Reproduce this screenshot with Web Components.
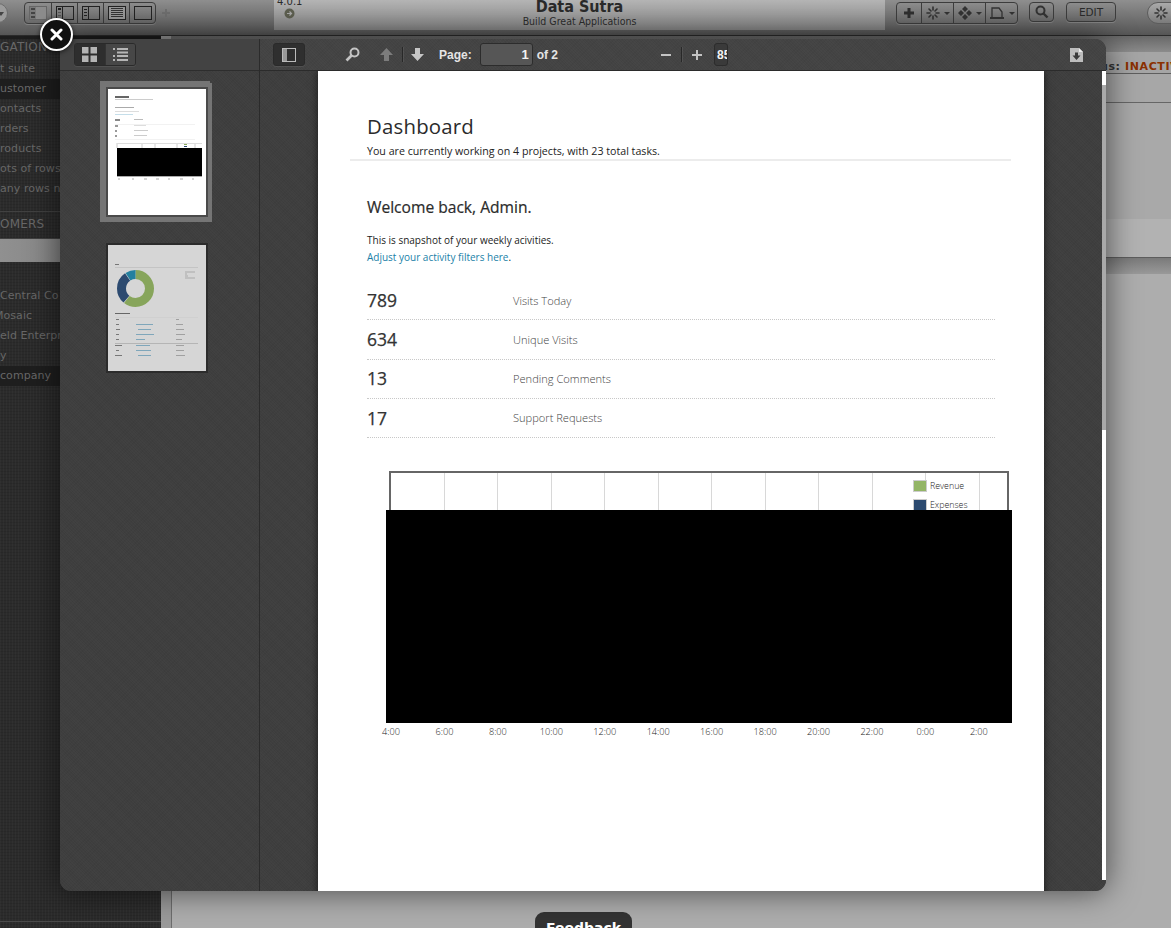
<!DOCTYPE html>
<html lang="en"><head><meta charset="utf-8"><title>Data Sutra</title>
<style>
html,body{margin:0;padding:0;background:#999;overflow:hidden}
body{width:1171px;height:928px;font-family:"DejaVu Sans",sans-serif}
</style></head><body>
<x-desk>
  <x-topbar slot="top"></x-topbar>
  <x-sidenav slot="nav"></x-sidenav>
  <x-main slot="main"></x-main>
  <x-pdf-modal slot="modal"></x-pdf-modal>
</x-desk>
<script>
function def(name, css, html, init){
  customElements.define(name, class extends HTMLElement{
    connectedCallback(){
      if(this.shadowRoot) return;
      const r=this.attachShadow({mode:'open'});
      r.innerHTML='<style>'+css+'</style>'+(typeof html==='function'?html(this):html);
      if(init) init(r,this);
    }
  });
}
const sv=(w,h,inner,extra='')=>`<svg width="${w}" height="${h}" viewBox="0 0 ${w} ${h}" ${extra}>${inner}</svg>`;
const grain='repeating-linear-gradient(45deg,rgba(255,255,255,.014) 0 1px,transparent 1px 2px),repeating-linear-gradient(-45deg,rgba(0,0,0,.03) 0 1px,transparent 1px 3px)';

def('x-desk',`
:host{display:block;position:relative;width:1171px;height:928px;overflow:hidden}
.g{display:grid;grid-template-columns:161px 1fr;grid-template-rows:36px 892px;width:1171px;height:928px}
.t{grid-column:1/3}
`,`<div class="g"><div class="t"><slot name="top"></slot></div><slot name="nav"></slot><slot name="main"></slot></div><slot name="modal"></slot>`);

def('x-topbar',`
:host{display:flex;height:36px;box-sizing:border-box;border-bottom:1px solid #2b2b2b;background:linear-gradient(#8f8f8f,#565656);overflow:hidden;align-items:flex-start}
.circle{width:20px;height:20px;border-radius:50%;background:#9c9c9c;margin:3px 0 0 -12px;flex:none;position:relative;border:1px solid #6d6d6d;box-sizing:border-box}
.circle:after{content:"";position:absolute;right:3px;top:8px;border:3px solid transparent;border-top:4px solid #444;border-bottom:0}
.seg{display:flex;height:20px;margin-top:2px;border:1px solid #3d3d3d;border-radius:4px;box-shadow:0 1px 0 rgba(255,255,255,.18);flex:none;background:linear-gradient(#8d8d8d,#6a6a6a)}
.seg>span{display:flex;align-items:center;justify-content:center;border-left:1px solid #3d3d3d;box-sizing:border-box;height:100%}
.seg>span:first-child{border-left:0}
.left{margin-left:16px}
.left>span{width:26px}
.plus{margin:9px 0 0 6px;flex:none;line-height:0}
.panel{margin-left:104px;width:611px;height:30px;flex:none;background:linear-gradient(#b5b5b5,#848484);display:grid;grid-template-columns:1fr auto 1fr;color:#222;overflow:hidden}
.ver{font-size:10px;line-height:10px;margin:-3px 0 0 3px;color:#2b2b2b}
.ver svg{display:block;margin:1px 0 0 7px}
.title{text-align:center;margin-top:-1px;font-family:"DejaVu Sans Condensed","DejaVu Sans",sans-serif}
.title b{display:block;font-size:16px;line-height:16px;color:#2a2a2a}
.title small{display:block;font-size:10.5px;line-height:12px;color:#2c2c2c}
.r1{margin-left:11px}
.r1>span{width:32px;gap:4px}
.r1>span:first-child{width:24px}
.r2{margin-left:11px;width:25px;justify-content:center;align-items:center;box-sizing:border-box}
.edit{margin-left:12px;width:50px;box-sizing:border-box;align-items:center;justify-content:center;font:10.5px/1 "DejaVu Sans",sans-serif;color:#2a2a2a}
.round{margin:2px 0 0 31px;width:40px;height:22px;border-radius:11px;background:linear-gradient(#aaa,#7b7b7b);border:1px solid #5c5c5c;display:flex;align-items:center;padding-left:6px;box-sizing:border-box;flex:none}
.car{width:0;height:0;border:3px solid transparent;border-top:3px solid #333;border-bottom:0}
`,()=>{
  const burst=`<g stroke="#333" stroke-width="1.6" stroke-linecap="round"><path d="M7 1v3M7 10v3M1 7h3M10 7h3M3 3l2 2M9 9l2 2M11 3L9 5M5 9l-2 2"/></g>`;
  return `
<span class="circle"></span>
<div class="seg left">
<span>${sv(18,14,'<rect x=".5" y=".5" width="17" height="13" fill="#8c8c8c" stroke="#666"/><rect x="1" y="1" width="6" height="12" fill="#7a7a7a"/><path d="M2 3h4M2 7h4M2 11h4" stroke="#444" stroke-width="2"/>')}</span>
<span>${sv(18,14,'<rect x=".5" y=".5" width="17" height="13" fill="none" stroke="#222"/><path d="M6.5 1v12" stroke="#222"/><path d="M2 3h3" stroke="#222" stroke-width="2"/><path d="M2 6.5h3M2 9.5h3" stroke="#555"/>')}</span>
<span>${sv(18,14,'<rect x=".5" y=".5" width="17" height="13" fill="none" stroke="#222"/><path d="M6.5 1v12" stroke="#222"/><path d="M2 3.5h3M2 6.5h3M2 9.5h3" stroke="#222"/>')}</span>
<span>${sv(18,14,'<rect x=".5" y=".5" width="17" height="13" fill="#999" stroke="#222"/><path d="M3 2.5h12M3 4.5h12M3 6.5h12M3 8.5h12M3 10.5h12" stroke="#333"/>')}</span>
<span>${sv(18,14,'<rect x=".5" y=".5" width="17" height="13" fill="none" stroke="#222"/>')}</span>
</div>
<span class="plus">${sv(8,8,'<path d="M4 0v8M0 4h8" stroke="#6e6e6e" stroke-width="2"/>')}</span>
<div class="panel">
  <div class="ver">4.0.1${sv(11,11,'<circle cx="5.5" cy="5.5" r="5" fill="#5d5f50"/><path d="M3 5.5h4M5.5 3.5l2 2-2 2" stroke="#a9a9a9" stroke-width="1.2" fill="none"/>')}</div>
  <div class="title"><b>Data Sutra</b><small>Build Great Applications</small></div>
  <div></div>
</div>
<div class="seg r1">
<span>${sv(12,12,'<path d="M6 1v10M1 6h10" stroke="#2f2f2f" stroke-width="3"/>')}</span>
<span>${sv(14,14,burst)}<i class="car"></i></span>
<span>${sv(14,14,'<path d="M7 0l3 3-3 3-3-3zM3 4l3 3-3 3-3-3zM11 4l3 3-3 3-3-3zM7 8l3 3-3 3-3-3z" fill="#333"/>')}<i class="car"></i></span>
<span>${sv(16,13,'<path d="M3 1h7l3 4v6H3z" fill="none" stroke="#333" stroke-width="1.3"/><path d="M1 10h14v2H1z" fill="#333"/>')}<i class="car"></i></span>
</div>
<div class="seg r2">${sv(14,14,'<circle cx="5.5" cy="5.5" r="4" fill="none" stroke="#333" stroke-width="2"/><path d="M8.5 8.5l4 4" stroke="#333" stroke-width="2.4"/>')}</div>
<div class="seg edit">EDIT</div>
<div class="round">${sv(14,14,burst)}</div>`;
});

def('x-nav-item',`
:host{display:block;height:20px;line-height:20px;font-size:11px;letter-spacing:.05px;color:#676767;white-space:nowrap;overflow:hidden}
:host([sel]){background:#1e1e1e}
.cut{display:inline-block;margin-left:-6px}
`,h=>h.hasAttribute('cut')?`<span class="cut"><slot></slot></span>`:`<slot></slot>`);

def('x-sidenav',`
:host{display:flex;flex-direction:column;height:892px;box-sizing:border-box;border-top:3px solid #1d1d1d;overflow:hidden;
background-color:#2b2b2b;background-image:repeating-linear-gradient(90deg,rgba(255,255,255,.025) 0 1px,transparent 1px 3px),repeating-linear-gradient(0deg,rgba(0,0,0,.09) 0 1px,transparent 1px 3px)}
.h{font-size:12px;letter-spacing:.2px;color:#676767;white-space:nowrap}
.h1{height:20px;line-height:17px}
.list{height:140px}
.h2{margin-top:12px;height:28px;line-height:24px;border-top:1px solid #414141;border-bottom:1px solid #414141;box-sizing:border-box}
.bar{height:23px;background:linear-gradient(90deg,#909090,#868686 40%,#5d5d5d);margin-bottom:24px}
.foot{margin-top:auto;height:6px;border-top:1px solid #4a4a4a}
`,`<div class="h h1">GATION</div>
<div class="list">
<x-nav-item>t suite</x-nav-item><x-nav-item sel>ustomer</x-nav-item><x-nav-item>ontacts</x-nav-item><x-nav-item>rders</x-nav-item><x-nav-item>roducts</x-nav-item><x-nav-item>ots of rows</x-nav-item><x-nav-item>any rows n</x-nav-item>
</div>
<div class="h h2">OMERS</div>
<div class="bar"></div>
<x-nav-item>Central Co</x-nav-item><x-nav-item cut>Mosaic</x-nav-item><x-nav-item>eld Enterpr</x-nav-item><x-nav-item>y</x-nav-item><x-nav-item sel>company</x-nav-item>
<div class="foot"></div>`);

def('x-main',`
:host{display:grid;grid-template-columns:11px 1fr;height:892px;position:relative;overflow:hidden}
.strip{background:#9a9a9a;border-right:1px solid #6d6d6d}
.c{display:flex;flex-direction:column;min-width:0;background:#ababab}
.a{height:16px;background:linear-gradient(#686868,#8b8b8b)}
.st{height:22px;box-sizing:border-box;padding-left:928px;border-bottom:1px solid #5e5e5e;font:bold 11px/30px "DejaVu Sans",sans-serif;letter-spacing:.6px;color:#333;white-space:nowrap;overflow:hidden;background:#a5a5a5}
.st b{color:#8a3000}
.b{height:28px;background:#a7a7a7;border-bottom:1px solid #666}
.d{height:116px;background:#a9a9a9}
.e{height:38px;background:#b2b2b2;border-bottom:1px solid #5d5d5d}
.f{height:16px;background:linear-gradient(#7a7a7a,#999)}
.g{flex:1;background:#adadad}
.fb{position:absolute;left:374px;top:876px;width:97px;height:40px;border-radius:9px 9px 0 0;background:#333;color:#fff;font:bold 14px/18px "DejaVu Sans",sans-serif;text-align:center;padding-top:7px;box-sizing:border-box}
`,`<div class="strip"></div><div class="c"><div class="a"></div><div class="st">us: <b>INACTIVE</b></div><div class="b"></div><div class="d"></div><div class="e"></div><div class="f"></div><div class="g"></div></div><div class="fb">Feedback</div>`);

def('x-pdf-toolbar',`
:host{display:flex;align-items:center;height:32px;box-sizing:border-box;border-bottom:1px solid #2b2b2b;background-color:#434343;background-image:${grain};color:#e4e4e4;font:bold 12px/1 "Liberation Sans",sans-serif;white-space:nowrap}
.btn{height:23px;border:1px solid #2a2a2a;border-radius:3px;background:#2f2f2f;box-sizing:border-box;display:flex;align-items:center;justify-content:center;box-shadow:0 1px 0 rgba(255,255,255,.07)}
.sep{width:1px;height:15px;background:#282828;box-shadow:1px 0 0 rgba(255,255,255,.08)}
.in{height:23px;border:1px solid #2c2c2c;border-radius:3px;background:#565656;box-sizing:border-box}
.pg{width:53px;margin-left:8px;text-align:right;line-height:22px;padding-right:3px;font-size:13px;color:#f3f3f3}
.z{width:14px;margin-left:11px;overflow:hidden;line-height:22px;padding-left:2px;font-size:12px;color:#f3f3f3;background:#3a3a3a}
`,`<div class="btn" style="margin-left:13px;width:32px">${sv(14,14,'<rect x=".5" y=".5" width="13" height="13" fill="none" stroke="#bbb"/><rect x="1" y="1" width="4" height="12" fill="#999"/>')}</div>
<span style="margin-left:40px;line-height:0">${sv(15,15,'<circle cx="9.5" cy="5.5" r="4" fill="none" stroke="#c4c4c4" stroke-width="2"/><path d="M6.5 8.5L1.5 13.5" stroke="#c4c4c4" stroke-width="2.6"/>')}</span>
<span style="margin-left:19px;line-height:0">${sv(15,15,'<path d="M7.5 1L14 8H10V14H5V8H1z" fill="#7c7c7c"/>')}</span>
<span class="sep" style="margin-left:8px"></span>
<span style="margin-left:7px;line-height:0">${sv(15,15,'<path d="M7.5 14L14 7H10V1H5V7H1z" fill="#c6c6c6"/>')}</span>
<span style="margin-left:14px">Page:</span>
<div class="in pg">1</div>
<span style="margin-left:4px">of 2</span>
<span style="margin-left:102px;line-height:0">${sv(12,12,'<path d="M1 6h10" stroke="#c4c4c4" stroke-width="2"/>')}</span>
<span class="sep" style="margin-left:9px"></span>
<span style="margin-left:9px;line-height:0">${sv(12,12,'<path d="M1 6h10M6 1v10" stroke="#c4c4c4" stroke-width="2"/>')}</span>
<div class="in z">85%</div>
<span style="margin-left:342px;line-height:0">${sv(13,15,'<path d="M0 1h9l4 4v10H0z" fill="#bdbdbd"/><path d="M9 1l4 4H9z" fill="#eee"/><path d="M6.5 13L10.5 8.5H8V5.5H5V8.5H2.5z" fill="#3a3a3a"/>')}</span>`);

def('x-thumb',`
:host{display:block;width:102px;height:130px;box-sizing:border-box;border:2px solid #2c2c2c;line-height:0;background:#fff;flex:none}
:host([sel]){border-color:#4a4a4a;box-shadow:0 0 0 4px #757575,-2px -2px 0 4px #757575,0 1px 0 4px #757575,-2px 1px 0 4px #757575}
::slotted(svg){display:block;filter:blur(.35px)}
`,`<slot></slot>`);

def('x-pdf-sidebar',`
:host{display:block;width:200px;box-sizing:border-box;border-right:1px solid #2b2b2b;height:100%;background-color:#3e3e3e;background-image:${grain}}
.head{display:flex;align-items:center;height:32px;box-sizing:border-box;border-bottom:1px solid #2d2d2d;background:#434343;padding-left:14px}
.seg{display:flex;height:23px;width:62px;border:1px solid #2a2a2a;border-radius:3px;overflow:hidden;box-sizing:border-box;box-shadow:0 1px 0 rgba(255,255,255,.07)}
.seg span{flex:1;display:flex;align-items:center;justify-content:center}
.seg .on{background:#2e2e2e}.seg .off{background:#474747;border-left:1px solid #333}
.list{display:flex;flex-direction:column;gap:26px;padding:16px 0 0 46px}
`,`<div class="head"><div class="seg"><span class="on">${sv(15,15,'<path d="M0 0h6.5v6.5H0zM8.5 0H15v6.5H8.5zM0 8.5h6.5V15H0zM8.5 8.5H15V15H8.5z" fill="#b5b5b5"/>')}</span><span class="off">${sv(15,15,'<path d="M0 1h2v2H0zM4 1h11v2H4zM4 4.5h11v2H4zM0 8h2v2H0zM4 8h11v2H4zM4 12h11v2H4zM0 12h2v2H0z" fill="#b5b5b5"/>')}</span></div></div>
<div class="list">
<x-thumb sel>${sv(98,126,`<rect width="98" height="126" fill="#fff"/>
<rect x="7" y="7" width="14" height="2" fill="#666"/><rect x="7" y="10" width="38" height="1" fill="#ccc"/>
<rect x="7" y="18" width="19" height="1" fill="#aaa"/><rect x="7" y="22" width="24" height="1" fill="#ddd"/><rect x="7" y="25" width="18" height="1" fill="#c5deea"/>
<rect x="7" y="30" width="5" height="2" fill="#888"/><rect x="26" y="30" width="9" height="1" fill="#bbb"/><rect x="7" y="35" width="80" height="1" fill="#f2f2f2"/>
<rect x="7" y="36" width="3" height="2" fill="#999"/><rect x="26" y="36" width="12" height="1" fill="#ddd"/><rect x="7" y="41" width="2" height="2" fill="#999"/><rect x="26" y="41" width="14" height="1" fill="#ccc"/><rect x="7" y="46" width="2" height="2" fill="#999"/><rect x="26" y="46" width="13" height="1" fill="#ccc"/><rect x="7" y="50" width="80" height="1" fill="#f2f2f2"/>
<path d="M9 54v5M34 54v5M47 54v5M69 54v5M87 54v5" stroke="#ccc"/><rect x="9" y="54" width="85" height="1" fill="#ddd"/>
<rect x="76" y="55" width="3" height="1" fill="#8aaa5e"/><rect x="76" y="57" width="3" height="1" fill="#2c4a70"/>
<rect x="9" y="59" width="85" height="28" fill="#000"/><rect x="9" y="87" width="85" height="1" fill="#aaa"/>
<path d="M10 90h2M24 90h2M36 90h3M48 90h3M60 90h2M72 90h3M84 90h2" stroke="#aaa"/></svg>`)}</x-thumb>
<x-thumb>${sv(98,126,`<rect width="98" height="126" fill="#d6d6d6"/>
<rect x="7" y="19" width="4" height="1" fill="#777"/><rect x="7" y="22" width="83" height="1" fill="#c4c4c4"/>
<g transform="rotate(-90 27.5 43.5)" fill="none" stroke-width="9"><circle cx="27.5" cy="43.5" r="14" stroke="#87a55b" stroke-dasharray="53 35"/><circle cx="27.5" cy="43.5" r="14" stroke="#2c4a70" stroke-dasharray="25.5 62.5" stroke-dashoffset="-53.5"/><circle cx="27.5" cy="43.5" r="14" stroke="#23809f" stroke-dasharray="8.5 79.5" stroke-dashoffset="-79.5"/></g>
<path d="M77 27h10M77 29h2M77 31h3M77 33h10" stroke="#aaa"/>
<rect x="7" y="68" width="15" height="1" fill="#666"/><rect x="7" y="72" width="83" height="1" fill="#d0d0d0"/>
<g fill="#777"><rect x="8" y="74" width="3" height="1"/><rect x="8" y="79" width="3" height="1"/><rect x="8" y="84" width="4" height="1"/><rect x="8" y="89" width="3" height="1"/><rect x="8" y="94" width="3" height="1"/><rect x="7" y="100" width="7" height="1"/><rect x="8" y="105" width="3" height="1"/><rect x="7" y="110" width="7" height="1"/></g>
<g fill="#7fa6ba"><rect x="28" y="79" width="17" height="1"/><rect x="30" y="84" width="13" height="1"/><rect x="28" y="89" width="18" height="1"/><rect x="28" y="94" width="9" height="1"/><rect x="28" y="100" width="14" height="1"/><rect x="28" y="105" width="15" height="1"/><rect x="30" y="110" width="13" height="1"/></g>
<g fill="#a0a0a0"><rect x="68" y="74" width="3" height="1"/><rect x="68" y="79" width="7" height="1"/><rect x="68" y="84" width="8" height="1"/><rect x="68" y="89" width="9" height="1"/><rect x="68" y="94" width="6" height="1"/><rect x="68" y="100" width="8" height="1"/><rect x="68" y="105" width="8" height="1"/><rect x="68" y="110" width="9" height="1"/></g>
<rect x="7" y="98" width="83" height="1" fill="#b5b5b5"/></svg>`)}</x-thumb>
</div>`);

def('x-stat',`
:host{display:grid;grid-template-columns:146px 1fr;align-items:center;width:628px;height:39.3px;box-sizing:border-box;border-bottom:1px dotted #c8c8c8;color:#333}
.n{font:400 17.5px/1 "Open Sans",sans-serif;-webkit-text-stroke:.25px #333;color:#333;padding-top:1px}
.l{font:300 11.1px/1 "Open Sans",sans-serif;color:#444}
`,h=>`<div class="n">${h.getAttribute('n')}</div><div class="l">${h.getAttribute('l')}</div>`);

def('x-chart',`
:host{display:block;margin-left:68px;width:626px;position:relative}
.frame{margin-left:3px;width:620px;height:39px;box-sizing:border-box;border:solid #666;border-width:2px 2px 0;background-color:#fff;
background-image:repeating-linear-gradient(90deg,transparent 0 52.5px,#d8d8d8 52.5px 53.5px)}
.black{height:213px;background:#000}
.axis{display:grid;grid-template-columns:repeat(12,53.45px);margin:3px 0 0 -21.7px;font:300 9.2px/12px "Open Sans",sans-serif;color:#222;text-align:center}
.legend{position:absolute;left:526px;top:9px;width:62px;height:30px;background:#fff;overflow:hidden;font:300 8.8px/12px "Open Sans",sans-serif;color:#222}
.legend div{display:flex;align-items:center;gap:3px;height:12px;margin:0 0 7px 1px}
.legend i{width:12px;height:10px;border:1px solid #ccc;flex:none}
`,()=>`<div class="frame"></div><div class="black"></div>
<div class="axis">${['4:00','6:00','8:00','10:00','12:00','14:00','16:00','18:00','20:00','22:00','0:00','2:00'].map(t=>`<span>${t}</span>`).join('')}</div>
<div class="legend"><div><i style="background:#93b566"></i>Revenue</div><div><i style="background:#2c4a70"></i>Expenses</div></div>`);

def('x-doc',`
:host{display:block;width:726px;height:900px;background:#fff;color:#222;font-family:"Open Sans",sans-serif;box-shadow:0 0 8px rgba(0,0,0,.6);overflow:hidden}
.hd{margin-left:32px;width:661px;box-sizing:border-box;padding:40px 0 0 17px;height:90px;border-bottom:2px solid #ececec}
h1{margin:0;font:400 20.4px/30px "Open Sans",sans-serif;letter-spacing:.2px;color:#2b2b2b}
.sub{font-size:10.65px;line-height:16px;margin-top:2px;color:#222}
.body{padding-left:49px}
h2{margin:36px 0 0;font:400 15.6px/20px "Open Sans",sans-serif;-webkit-text-stroke:.2px #2b2b2b;color:#2b2b2b}
p{margin:15px 0 0;font-size:10px;line-height:17px;color:#222}
a{color:#1a7fa8;text-decoration:none}
.stats{margin:15px 0 33px}
`,`<div class="hd"><h1>Dashboard</h1><div class="sub">You are currently working on 4 projects, with 23 total tasks.</div></div>
<div class="body"><h2>Welcome back, Admin.</h2>
<p>This is snapshot of your weekly acivities.<br><a>Adjust your activity filters here</a>.</p>
<div class="stats"><x-stat n="789" l="Visits Today"></x-stat><x-stat n="634" l="Unique Visits"></x-stat><x-stat n="13" l="Pending Comments"></x-stat><x-stat n="17" l="Support Requests"></x-stat></div></div>
<x-chart></x-chart>`);

def('x-pdf-modal',`
:host{display:block;position:absolute;left:60px;top:39px;width:1046px;height:852px}
.frame{display:grid;grid-template-columns:200px 1fr;width:100%;height:100%;border-radius:11px;overflow:hidden;background:#3e3e3e;position:relative}
.sh{position:absolute;inset:0;border-radius:11px;box-shadow:0 0 32px rgba(0,0,0,.6)}
.view{display:flex;flex-direction:column;min-width:0;height:852px}
.pages{flex:1;padding-left:58px;overflow:hidden;min-height:0;background-color:#3e3e3e;background-image:${grain}}
.sb{position:absolute;right:0;top:32px;width:4px;height:809px;background:#fff}
.sb i{display:block;margin-top:14px;height:345px;background:#a9a9a9}
.close{position:absolute;left:-20px;top:-21px;width:33px;height:33px;box-sizing:border-box;border-radius:50%;background:#111;border:2px solid #fff;box-shadow:0 1px 5px rgba(0,0,0,.7);display:flex;align-items:center;justify-content:center}
`,`<div class="sh"></div><div class="frame"><x-pdf-sidebar></x-pdf-sidebar><div class="view"><x-pdf-toolbar></x-pdf-toolbar><div class="pages"><x-doc></x-doc></div></div><div class="sb"><i></i></div></div>
<div class="close">${sv(13,13,'<path d="M2 2l9 9M11 2l-9 9" stroke="#fff" stroke-width="3" stroke-linecap="round"/>')}</div>`);
</script>
</body></html>
